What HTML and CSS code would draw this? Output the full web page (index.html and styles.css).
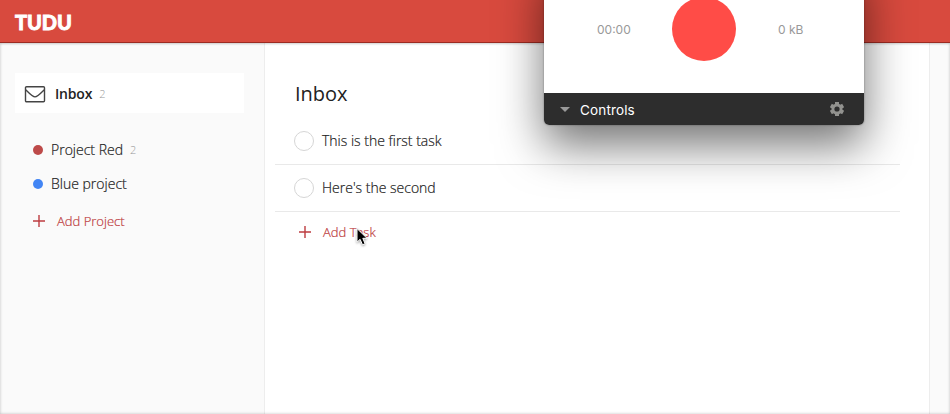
FILE: index.html
```html
<!DOCTYPE html>
<html lang="en">
<head>
<meta charset="utf-8">
<title>Tudu</title>
<link rel="stylesheet" href="styles.css">
</head>
<body>
<div class="app">
  <header class="header"><span class="logo">TUDU</span></header>
  <div class="body">
    <nav class="sidebar">
      <a class="inbox">
        <svg class="mail" width="22" height="18" viewBox="0 0 22 18" fill="none" stroke="#444" stroke-width="1.4"><rect x="1.5" y="1.7" width="19" height="15" rx="1"/><path d="M1.7 4.7C4.5 7.5 8.5 11.9 11 11.9S17.5 7.5 20.3 4.7"/></svg>
        <span class="inbox-name">Inbox</span><span class="count">2</span>
      </a>
      <div class="projects">
        <a class="project"><i class="dot red"></i><span class="project-name">Project Red</span><span class="count">2</span></a>
        <a class="project"><i class="dot blue"></i><span class="project-name">Blue project</span></a>
      </div>
      <a class="add add-project"><svg width="12" height="12" viewBox="0 0 12 12" stroke="currentColor" stroke-width="1.4"><path d="M0 6H12M6 0V12"/></svg><span class="add-name">Add Project</span></a>
    </nav>
    <main class="main">
      <h1 class="title">Inbox</h1>
      <ul class="tasks">
        <li class="task"><i class="check"></i><span class="task-name">This is the first task</span></li>
        <li class="task"><i class="check"></i><span class="task-name">Here's the second</span></li>
      </ul>
      <a class="add add-task"><svg width="12" height="12" viewBox="0 0 12 12" stroke="currentColor" stroke-width="1.4"><path d="M0 6H12M6 0V12"/></svg><span class="add-name">Add Task</span></a>
    </main>
  </div>
</div>
<section class="recorder">
  <div class="recorder-top">
    <span class="time">00:00</span><i class="record"></i><span class="size">0 kB</span>
  </div>
  <div class="controls">
    <svg width="10" height="5" viewBox="0 0 10 5"><path d="M0 0H10L5 5Z" fill="#999"/></svg>
    <span class="controls-name">Controls</span>
    <svg class="gear" width="18" height="18" viewBox="0 0 18 18"><g stroke="#92928f" stroke-width="4" stroke-linecap="butt"><path d="M9 1.9V16.1M2.85 5.45L15.15 12.55M2.85 12.55L15.15 5.45"/></g><circle cx="9" cy="9" r="5.5" fill="#92928f"/><circle cx="9" cy="9" r="2.6" fill="#2d2d2d"/></svg>
  </div>
</section>
<svg class="cursor" width="16" height="22" viewBox="0 0 16 22"><path d="M2 1.5V15.2L5.1 12.3L7.5 17.8L10.1 16.7L7.8 11.3H12Z" fill="#000" stroke="#fff" stroke-width="1"/></svg>
</body>
</html>
```

FILE: styles.css
```css
* { box-sizing: border-box; }
body {
  margin: 0;
  height: 414px;
  overflow: hidden;
  position: relative;
  background: #fafafa;
  color: #222;
  font: 300 14px/20px "Open Sans", sans-serif;
}
.app { height: 414px; display: flex; flex-direction: column; }
.app::after {
  content: "";
  position: absolute;
  inset: 0;
  box-shadow: inset 0 0 3px rgba(0, 0, 0, .25);
  pointer-events: none;
}
.header {
  height: 43px;
  flex: none;
  display: flex;
  align-items: center;
  padding: 2px 15px 0;
  background: #d84a3e;
  border-bottom: 1px solid #9c2b22;
  box-shadow: 0 1px 2px rgba(0, 0, 0, .2);
  z-index: 1;
}
.logo { font: 900 20px/24px Lato, sans-serif; color: #fff; letter-spacing: -.1px; -webkit-text-stroke: .8px #fff; }
.body { flex: 1; display: flex; }
.sidebar { width: 264px; padding: 30px 20px 0 15px; }
.inbox { height: 40px; display: flex; align-items: center; padding: 2px 9px 0; background: #fff; }
.mail { margin-right: 9px; }
.inbox-name { font-weight: 600; letter-spacing: -.2px; }
.count { margin-left: 7px; font-size: 11px; color: #999; }
.projects { padding-top: 20px; }
.project { height: 34px; display: flex; align-items: center; padding-left: 18px; }
.project-name, .task-name, .add-name { -webkit-text-stroke: .2px currentColor; }
.dot { width: 10px; height: 10px; border-radius: 50%; margin-right: 8px; }
.red { background: #bd4a49; }
.blue { background: #4285f4; }
.add { display: flex; align-items: center; color: #bd3c40; font-size: 13px; }
.add-project { padding: 10px 0 0 18px; gap: 12px; }
.main {
  width: 666px;
  padding: 38px 29px 0 10px;
  background: #fff;
  border: solid #ededed;
  border-width: 0 1px;
}
.title { margin: 0 0 0 20px; font-size: 20px; line-height: 26px; font-weight: 400; }
.tasks { list-style: none; margin: 11px 0 0; padding: 0; }
.task { height: 47px; display: flex; align-items: center; padding-left: 19px; border-bottom: 1px solid #e9e9e9; }
.check { width: 20px; height: 20px; border: 1px solid #d6d6d6; border-radius: 50%; margin-right: 8px; }
.add-task { padding: 10px 0 0 24px; gap: 12px; }
.recorder {
  position: absolute;
  left: 544px;
  top: -40px;
  width: 320px;
  height: 165px;
  border-radius: 0 0 5px 5px;
  background: #fff;
  box-shadow: 0 20px 46px rgba(0, 0, 0, .55), 0 0 2px rgba(0, 0, 0, .4);
  overflow: hidden;
  z-index: 2;
  font-family: Inter, sans-serif;
  font-weight: 400;
}
.recorder-top { height: 133px; padding: 6px 53px 0; display: grid; grid-template-columns: 1fr 64px 1fr; align-items: center; font-size: 12px; color: #999; }
.record { height: 64px; border-radius: 50%; background: #ff4c47; margin-top: -2px; }
.size { margin-left: 42px; }
.controls { height: 32px; display: flex; align-items: center; padding: 0 18px 0 16px; background: #2d2d2d; color: #fff; font-size: 13.5px; letter-spacing: .15px; }
.controls-name { margin: 2px 0 0 10px; }
.gear { margin-left: auto; }
.cursor { position: absolute; left: 355px; top: 227px; filter: drop-shadow(0 1px 1px rgba(0, 0, 0, .35)); }
```
